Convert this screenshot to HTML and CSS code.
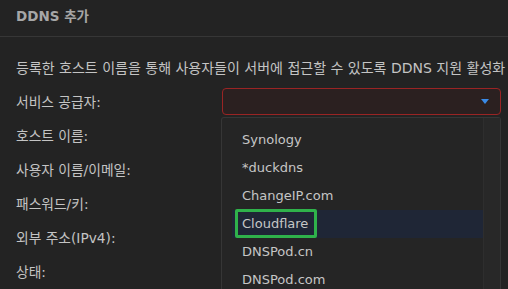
FILE: index.html
```html
<!DOCTYPE html>
<html lang="ko">
<head>
    <meta charset="UTF-8">
    <meta name="viewport" content="width=device-width, initial-scale=1.0">
    <title>DDNS 추가</title>
    <link rel="stylesheet" href="styles.css">
</head>
<body>
    <div class="dialog">
        <div class="dialog-title">DDNS 추가</div>
        <p class="desc">등록한 호스트 이름을 통해 사용자들이 서버에 접근할 수 있도록 DDNS 지원 활성화</p>
        <div class="form">
            <div class="label">서비스 공급자:</div>
            <div class="field">
                <div class="select">
                    <span class="arrow"></span>
                </div>
                <div class="dropdown">
                    <ul class="options">
                        <li>Synology</li>
                        <li>*duckdns</li>
                        <li>ChangeIP.com</li>
                        <li class="hover"><span class="mark">Cloudflare</span></li>
                        <li>DNSPod.cn</li>
                        <li>DNSPod.com</li>
                    </ul>
                    <div class="track"></div>
                </div>
            </div>
            <div class="label">호스트 이름:</div>
            <div class="field"></div>
            <div class="label">사용자 이름/이메일:</div>
            <div class="field"></div>
            <div class="label">패스워드/키:</div>
            <div class="field"></div>
            <div class="label">외부 주소(IPv4):</div>
            <div class="field"></div>
            <div class="label">상태:</div>
            <div class="field"></div>
        </div>
    </div>
</body>
</html>
```

FILE: styles.css
```css
* {
  margin: 0;
  padding: 0;
  box-sizing: border-box;
}
body {
  background: #232323;
  color: #c4c4c4;
  font-family: "DejaVu Sans", "Noto Sans CJK KR", sans-serif;
  font-size: 13px;
  overflow: hidden;
  height: 289px;
}
.dialog-title {
  height: 37px;
  line-height: 32px;
  padding: 0 16px;
  font-size: 13.5px;
  font-weight: bold;
  color: #a6a6a6;
  border-bottom: 1px solid #363636;
}
.desc {
  margin: 21px 0 6px 16px;
  line-height: 20px;
  font-size: 14px;
  white-space: nowrap;
}
.form {
  display: grid;
  grid-template-columns: 206px 279px;
  grid-auto-rows: 34px;
  padding-left: 16px;
}
.label {
  display: flex;
  align-items: center;
  font-size: 13.75px;
}
.field {
  position: relative;
  display: flex;
  align-items: center;
}
.select {
  width: 279px;
  height: 27px;
  margin-top: 1px;
  border: 1px solid #9a2424;
  border-radius: 4px;
  background: #2b2020;
  display: flex;
  align-items: center;
  justify-content: flex-end;
  padding-right: 11px;
}
.arrow {
  width: 0;
  height: 0;
  border-left: 4px solid transparent;
  border-right: 4px solid transparent;
  border-top: 5px solid #3a8ae6;
}
.dropdown {
  position: absolute;
  top: 33px;
  left: -1px;
  width: 280px;
  height: 172px;
  background: #252525;
  border: 1px solid #363636;
  border-bottom: 0;
  border-radius: 3px 3px 0 0;
  display: flex;
  z-index: 2;
}
.options {
  list-style: none;
  flex: 1;
  padding: 8px 0 0 10px;
}
.options li {
  height: 28px;
  line-height: 28px;
  padding-left: 10px;
  color: #c6c6c6;
}
.options li.hover {
  background: #1f2636;
}
.mark {
  position: relative;
}
.mark::after {
  content: "";
  position: absolute;
  left: -7px;
  right: -9px;
  top: -7px;
  bottom: -7px;
  border: 3px solid #2fb24b;
  border-radius: 2px;
}
.track {
  width: 17px;
  background: #282828;
  border-left: 1px solid #2e2e2e;
}
```
